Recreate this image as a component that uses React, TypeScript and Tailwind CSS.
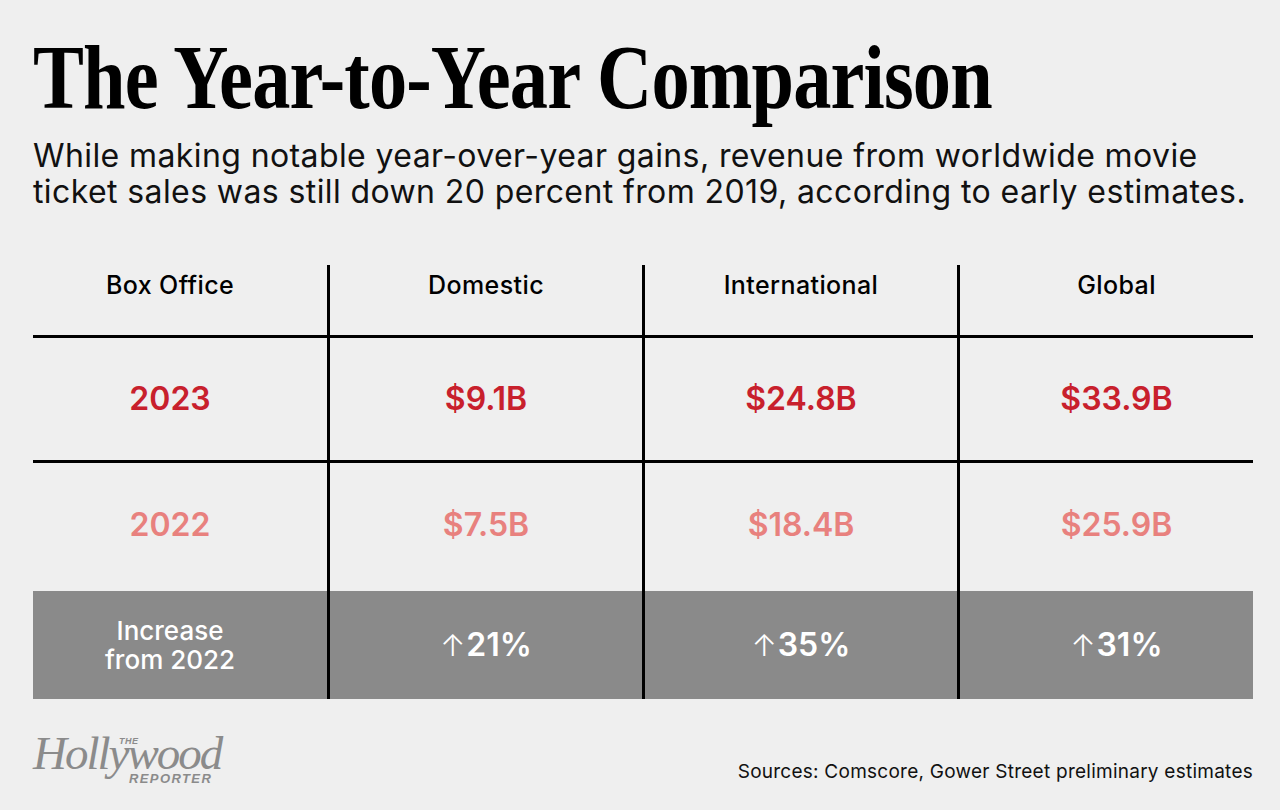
import React from "react";

const RED = "text-[#c8202c]";
const PINK = "text-[#e8817e]";

function Cell({
  children,
  idx,
  className = "",
}: {
  children: React.ReactNode;
  idx: number;
  className?: string;
}) {
  const border = idx > 0 ? "border-l-[3px] border-black" : "";
  const pad = idx === 0 ? "pr-[20px]" : idx === 3 ? "pl-[20px]" : "";
  return (
    <div className={`flex justify-center text-center ${border} ${pad} ${className}`}>
      {children}
    </div>
  );
}

const grid = "grid grid-cols-[294px_315px_315px_296px] w-[1220px]";

export default function App() {
  const headers = ["Box Office", "Domestic", "International", "Global"];
  const r2023 = ["2023", "$9.1B", "$24.8B", "$33.9B"];
  const r2022 = ["2022", "$7.5B", "$18.4B", "$25.9B"];
  const inc = ["21%", "35%", "31%"];
  return (
    <div className="w-[1280px] h-[810px] bg-[#efefef] overflow-hidden pt-[31px]">
      <div className="pl-[33px]">
        <h1 className="font-['Liberation_Serif',serif] font-bold text-[92px] leading-none text-black whitespace-nowrap origin-left scale-x-[0.83] tracking-[-1px]">
          The Year-to-Year Comparison
        </h1>
        <p className="mt-[15px] font-['Inter',sans-serif] text-[32px] leading-[36px] text-[#111] whitespace-nowrap tracking-[0.4px]">
          <span className="block">
            While making notable year-over-year gains, revenue from worldwide movie
          </span>
          <span className="block">
            ticket sales was still down 20 percent from 2019, according to early estimates.
          </span>
        </p>
      </div>

      <div className="ml-[33px] mt-[55px] w-[1220px] font-['Inter',sans-serif]">
        <div className={`${grid} h-[70px]`}>
          {headers.map((h, i) => (
            <Cell key={h} idx={i} className="items-start pt-[5px]">
              <span className="text-[25px] leading-[30px] font-medium text-black tracking-[0.4px]">{h}</span>
            </Cell>
          ))}
        </div>
        <div className="h-[3px] bg-black w-[1220px]" />
        <div className={`${grid} h-[122px]`}>
          {r2023.map((v, i) => (
            <Cell key={v} idx={i} className="items-center">
              <span className={`text-[32px] leading-none font-semibold ${RED}`}>{v}</span>
            </Cell>
          ))}
        </div>
        <div className="h-[3px] bg-black w-[1220px]" />
        <div className={`${grid} h-[128px]`}>
          {r2022.map((v, i) => (
            <Cell key={v} idx={i} className="items-center pb-[4px]">
              <span className={`text-[32px] leading-none font-semibold ${PINK}`}>{v}</span>
            </Cell>
          ))}
        </div>
        <div className={`${grid} h-[108px] bg-[#8a8a8a]`}>
          <Cell idx={0} className="items-center">
            <span className="text-[26px] leading-[29px] font-medium text-white">
              Increase
              <br />
              from 2022
            </span>
          </Cell>
          {inc.map((v, i) => (
            <Cell key={v} idx={i + 1} className="items-center">
              <span className="text-[32px] leading-none font-semibold text-white flex items-center">
                <span className="font-light text-[30px] mr-[1px]">↑</span>
                {v}
              </span>
            </Cell>
          ))}
        </div>
      </div>

      <div className="ml-[33px] w-[1220px] flex justify-between items-start">
        <div className="relative mt-[31px] w-[200px] h-[56px] text-[#8b8b8b]">
          <span className="block font-['Liberation_Serif',serif] italic text-[47px] leading-none tracking-[-2px]">
            Hollywood
          </span>
          <span className="absolute left-[86px] top-[7px] font-['Liberation_Sans',sans-serif] font-bold italic text-[9px] leading-none tracking-[0.5px]">
            THE
          </span>
          <span className="absolute left-[96px] top-[42px] font-['Liberation_Sans',sans-serif] font-bold italic text-[13px] leading-none tracking-[1.4px]">
            REPORTER
          </span>
        </div>
        <div className="mt-[63px] font-['Inter',sans-serif] text-[19px] leading-none text-[#111] tracking-[0.25px] whitespace-nowrap">
          Sources: Comscore, Gower Street preliminary estimates
        </div>
      </div>
    </div>
  );
}
